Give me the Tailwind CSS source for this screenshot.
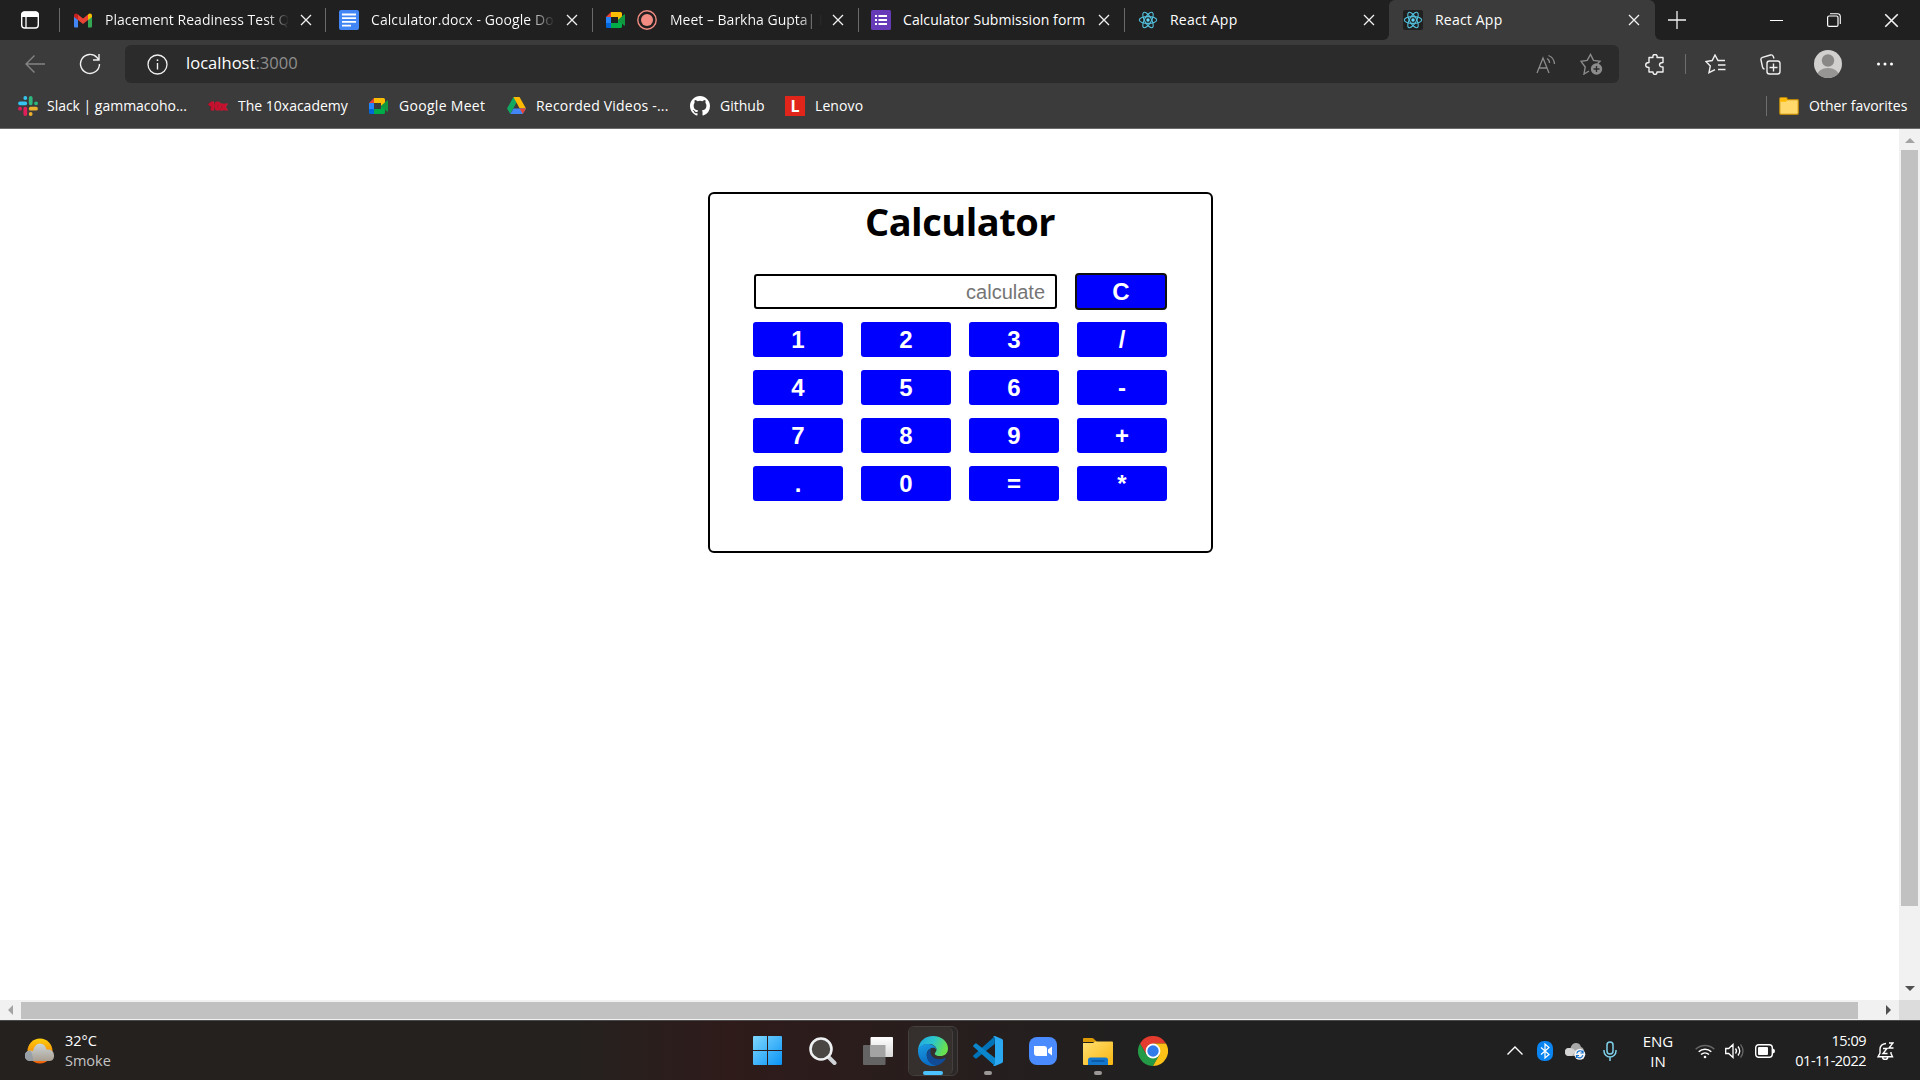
<!DOCTYPE html>
<html lang="en">
<head>
<meta charset="utf-8">
<title>React App</title>
<script src="https://cdn.jsdelivr.net/npm/@tailwindcss/browser@4"></script>
</head>
<body class="w-[1920px] h-[1080px] overflow-hidden flex flex-col bg-white font-['Open_Sans','Noto_Sans',sans-serif] text-[14px] text-white">

<svg class="hidden">
  <defs>
    <symbol id="x" viewBox="0 0 12 12"><path d="M1 1l10 10M11 1L1 11" stroke="#f2f2f2" stroke-width="1.3" fill="none"/></symbol>
    <symbol id="meet" viewBox="0 0 20 16">
      <path d="M0 5L5 0v5z" fill="#ea4335"/><path d="M5 0h9.500q1.500 0 1.500 1.500V6l-4 3V5H5z" fill="#fbbc04"/>
      <path d="M0 5h5v6H0z" fill="#2684fc"/><path d="M0 11h5v5H1.500Q0 16 0 14.500z" fill="#0066da"/>
      <path d="M5 11h7V8l4-3v9.500q0 1.500-1.500 1.500H5z" fill="#00ac47"/><path d="M12 8l6-5.500q1-.7 1 .5v10q0 1.200-1 .5z" fill="#11983f"/>
    </symbol>
    <symbol id="react" viewBox="0 0 20 20">
      <g fill="none" stroke="#53c1de" stroke-width="1.100"><ellipse cx="10" cy="10" rx="8.700" ry="3.400"/><ellipse cx="10" cy="10" rx="8.700" ry="3.400" transform="rotate(60 10 10)"/><ellipse cx="10" cy="10" rx="8.700" ry="3.400" transform="rotate(120 10 10)"/></g><circle cx="10" cy="10" r="1.700" fill="#61dafb"/>
    </symbol>
  </defs>
</svg>

<!-- Tab strip -->
<div class="h-10 shrink-0 flex bg-[#3b3b3b]">
  <div class="w-[1389px] shrink-0 flex items-center bg-[#202020] rounded-br-md">
    <div class="w-[59px] pl-5"><svg class="size-5" viewBox="0 0 20 20"><rect x="1.700" y="2" width="16.600" height="16" rx="3" fill="none" stroke="#fff" stroke-width="1.400"/><path d="M1.500 4.500Q1.500 1.500 4.500 1.500h11q3 0 3 3V7h-17z" fill="#fff"/><path d="M6 7v11" stroke="#fff" stroke-width="1.300"/></svg></div>
    <div class="w-[266px] h-6 flex items-center border-l border-[#6a6a6a]">
      <svg class="ml-3.5 w-[18px] h-[15px]" viewBox="0 0 18 14"><path d="M0 2v11q0 1 1 1h3V5z" fill="#4285f4"/><path d="M18 2v11q0 1-1 1h-3V5z" fill="#34a853"/><path d="M4 1l5 4 5-4v5.500L9 10.500 4 6.500z" fill="#ea4335"/><path d="M0 2Q0 0 2 0q1 0 2 1v5.500L0 3.500z" fill="#c5221f"/><path d="M18 2q0-2-2-2-1 0-2 1v5.500l4-3z" fill="#fbbc04"/></svg>
      <span class="ml-[13px] mb-0.5 w-[184px] overflow-hidden whitespace-nowrap tracking-[0.020px] bg-linear-to-r from-white from-88% to-transparent bg-clip-text text-transparent">Placement Readiness Test Q</span>
      <svg class="ml-[11px] size-3"><use href="#x"/></svg>
    </div>
    <div class="w-[267px] h-6 flex items-center border-l border-[#6a6a6a]">
      <svg class="ml-[13px] size-5" viewBox="0 0 20 20"><rect width="20" height="20" rx="2" fill="#4285f4"/><path d="M3 4.500h14M3 8.200h14M3 11.900h14M3 15.600h9" stroke="#fff" stroke-width="1.800"/></svg>
      <span class="ml-3 mb-0.5 w-[184px] overflow-hidden whitespace-nowrap tracking-[0.080px] bg-linear-to-r from-white from-86% to-transparent bg-clip-text text-transparent">Calculator.docx - Google Doc</span>
      <svg class="ml-[11px] size-3"><use href="#x"/></svg>
    </div>
    <div class="w-[266px] h-6 flex items-center border-l border-[#6a6a6a]">
      <svg class="ml-[13px] w-[20px] h-[16px]"><use href="#meet"/></svg>
      <svg class="ml-[11px] size-5" viewBox="0 0 20 20"><circle cx="10" cy="10" r="9.200" fill="none" stroke="#f28b82" stroke-width="1.400"/><circle cx="10" cy="10" r="6" fill="#f28b82"/></svg>
      <span class="ml-[13px] mb-0.5 w-[152px] overflow-hidden whitespace-nowrap bg-linear-to-r from-white from-84% to-transparent bg-clip-text text-transparent">Meet – Barkha Gupta| P</span>
      <svg class="ml-[10px] size-3"><use href="#x"/></svg>
    </div>
    <div class="w-[266px] h-6 flex items-center border-l border-[#6a6a6a]">
      <svg class="ml-3 size-5" viewBox="0 0 20 20"><rect width="20" height="20" rx="1.500" fill="#673ab7"/><path d="M7.500 6h8.500M7.500 10h8.500M7.500 14h8.500" stroke="#fff" stroke-width="2"/><path d="M4 6h2M4 10h2M4 14h2" stroke="#fff" stroke-width="2"/></svg>
      <span class="ml-3 mb-0.5 w-[185px] whitespace-nowrap tracking-[0.080px]">Calculator Submission form</span>
      <svg class="ml-[10px] size-3"><use href="#x"/></svg>
    </div>
    <div class="w-[265px] h-6 flex items-center border-l border-[#6a6a6a]">
      <svg class="ml-[13px] size-5"><use href="#react"/></svg>
      <span class="ml-3 mb-0.5 w-[185px] tracking-[0.200px]">React App</span>
      <svg class="ml-2 size-3"><use href="#x"/></svg>
    </div>
  </div>
  <div class="w-[266px] shrink-0 bg-[#202020]"><div class="h-full flex items-center bg-[#3b3b3b] rounded-t-md">
    <svg class="ml-3.5 size-5 rounded-xs bg-[#202020]"><use href="#react"/></svg>
    <span class="ml-3 mb-0.5 w-[182px] tracking-[0.200px]">React App</span>
    <svg class="ml-[11px] size-3"><use href="#x"/></svg>
  </div></div>
  <div class="flex-1 flex items-center bg-[#202020] rounded-bl-md">
    <svg class="ml-[13px] size-[18px]" viewBox="0 0 18 18"><path d="M9 0v18M0 9h18" stroke="#f2f2f2" stroke-width="1.300"/></svg>
    <div class="ml-[84px] w-[13px] h-px bg-white"></div>
    <svg class="ml-11 size-[14px]" viewBox="0 0 14 14"><rect x=".6" y="3" width="10.400" height="10.400" rx="1.500" fill="none" stroke="#fff" stroke-width="1.200"/><path d="M3 .8h7.500q2.800 0 2.800 2.800V11" fill="none" stroke="#fff" stroke-width="1.100"/></svg>
    <svg class="ml-[43px] size-[15px]"><use href="#x"/></svg>
  </div>
</div>

<!-- Address bar -->
<div class="h-[48px] shrink-0 flex items-center bg-[#3b3b3b]">
  <svg class="ml-[25px] w-5 h-[18px]" viewBox="0 0 20 18"><path d="M20 9H1M9.500 .5L1 9l8.500 8.500" fill="none" stroke="#848484" stroke-width="1.400"/></svg>
  <svg class="ml-[34px] size-[22px]" viewBox="0 0 22 22"><path d="M20.500 11a9.500 9.500 0 1 1-2.500-6.500L20 7M20 1v6h-6" fill="none" stroke="#f0f0f0" stroke-width="1.400"/></svg>
  <div class="ml-[24px] w-[1494px] h-[38px] flex items-center rounded-md bg-[#2b2b2b]">
    <svg class="ml-[22px] size-[21px]" viewBox="0 0 21 21"><circle cx="10.500" cy="10.500" r="9.500" fill="none" stroke="#f0f0f0" stroke-width="1.300"/><path d="M10.500 9v6.500" stroke="#f0f0f0" stroke-width="1.400"/><circle cx="10.500" cy="6.200" r=".9" fill="#f0f0f0"/></svg>
    <span class="ml-[18px] mb-px text-[16.500px] tracking-[0.030px]">localhost<span class="text-[#8e8e8e]">:3000</span></span>
    <svg class="ml-auto w-5 h-[20px]" viewBox="0 0 20 20" fill="none" stroke="#8c8c8c" stroke-width="1.300"><path d="M1 19L7 4l6 15M3 14h8M11 4.500a5 5 0 0 1 2.500 4.500M12.500 1.500A9.500 9.500 0 0 1 18.500 10M11 4.500"/></svg>
    <svg class="ml-6 mr-4 w-[23px] h-[22px]" viewBox="0 0 23 22"><path d="M9 18l-5 3 1.200-7L1 8.300l6.200-.9L10.500 1.500l3 5.900 6.500.9-2.500 2.500" fill="none" stroke="#8c8c8c" stroke-width="1.400"/><circle cx="16.500" cy="16" r="5.700" fill="#8c8c8c"/><path d="M16.500 13v6M13.500 16h6" stroke="#2b2b2b" stroke-width="1.300"/></svg>
  </div>
  <svg class="ml-[26px] w-[20px] h-[21px]" viewBox="0 0 20 21"><path d="M4 3.500h4q-.5-3 2-3t2 3h6v5q-3.500 0-3.500 2.300T18 13v5h-6q0 2.500-2 2.500T8 18H4v-4.500q-3.300 0-3.300-2.500T4 8.500z" fill="none" stroke="#f0f0f0" stroke-width="1.400" stroke-linejoin="round"/></svg>
  <div class="ml-5 w-px h-5 bg-[#6d6d6d]"></div>
  <svg class="ml-[19px] w-[21px] h-5" viewBox="0 0 21 20" fill="none" stroke="#f0f0f0" stroke-width="1.400"><path d="M20 6.500h-7L10 1 7.200 6.500 1 7.500l4.300 4.500L4 18.700l6-3M13 11h7.500M13 15.500h7.500"/></svg>
  <svg class="ml-[34px] w-[21px] h-[21px]" viewBox="0 0 21 21" fill="none" stroke="#f0f0f0" stroke-width="1.400"><rect x="7" y="7" width="13" height="13" rx="2.500"/><path d="M13.500 9.500v8M9.500 13.500h8M4.500 15Q3 15 2.500 13L1 6Q.5 4 2.500 3.300L10.500 1q2-.5 2.800 1.500L14 4.500"/></svg>
  <svg class="ml-[33px] size-7" viewBox="0 0 28 28"><defs><clipPath id="av"><circle cx="14" cy="14" r="14"/></clipPath></defs><g clip-path="url(#av)"><rect width="28" height="28" fill="#d2d0ce"/><circle cx="14" cy="10.500" r="6.200" fill="#8a8886"/><ellipse cx="14" cy="26" rx="11" ry="8" fill="#979593"/></g></svg>
  <svg class="ml-[34px] w-[18px] h-1" viewBox="0 0 18 4" fill="#fff"><circle cx="2.500" cy="2" r="1.500"/><circle cx="9" cy="2" r="1.500"/><circle cx="15.500" cy="2" r="1.500"/></svg>
</div>

<!-- Favorites bar -->
<div class="h-[41px] shrink-0 flex items-center bg-[#3b3b3b] border-b border-[#6b6b6b] pb-[5px] whitespace-nowrap">
  <svg class="ml-[18px] size-5" viewBox="0 0 20 20" stroke-width="3.800" stroke-linecap="round"><path d="M7.300 1.900v.1M2 7.300h5.300" stroke="#36c5f0"/><path d="M12.700 2v5.300M18 7.300h.1" stroke="#2eb67d"/><path d="M12.700 12.700h5.300M12.700 18v.1" stroke="#ecb22e"/><path d="M2 12.700h.1M7.300 12.700V18" stroke="#e01e5a"/></svg>
  <span class="ml-[9px] w-[142px] tracking-[-0.020px]">Slack | gammacoho...</span>
  <span class="ml-[19px] w-5 text-[11px] leading-5 font-black text-[#c8102e] tracking-[-0.500px] [-webkit-text-stroke:1px_#c8102e]">10x</span>
  <span class="ml-[10px] w-[112px]">The 10xacademy</span>
  <svg class="ml-[19px] w-5 h-4"><use href="#meet"/></svg>
  <span class="ml-[10px] w-[88px] tracking-[0.300px]">Google Meet</span>
  <svg class="ml-5 w-[19px] h-[17px]" viewBox="0 0 19 17"><path d="M6.500 0h6L9.500 5.500 3.300 17 0 11.500z" fill="#11a861"/><path d="M6.500 0h6L19 11.500h-6.300z" fill="#ffba00"/><path d="M3.300 17L6.500 11.500H19L15.700 17z" fill="#4285f4"/><path d="M12.700 11.500H19L15.700 17z" fill="#ea4335"/></svg>
  <span class="ml-[10px] w-[134px] tracking-[0.200px]">Recorded Videos -...</span>
  <svg class="ml-5 size-5" viewBox="0 0 16 16"><path fill="#fff" d="M8 0C3.580 0 0 3.580 0 8c0 3.540 2.290 6.530 5.470 7.590.4.070.55-.17.55-.38 0-.19-.01-.82-.01-1.490-2.010.37-2.530-.49-2.690-.94-.09-.23-.48-.94-.82-1.130-.28-.15-.68-.52-.01-.53.63-.01 1.080.58 1.230.82.72 1.210 1.870.87 2.330.66.070-.52.28-.87.51-1.070-1.780-.2-3.640-.89-3.640-3.950 0-.87.31-1.590.82-2.150-.08-.2-.36-1.020.08-2.120 0 0 .67-.21 2.200.82a7.500 7.500 0 0 1 4 0c1.530-1.040 2.200-.82 2.200-.82.44 1.100.16 1.920.08 2.120.51.56.82 1.270.82 2.150 0 3.070-1.870 3.750-3.650 3.950.29.25.54.73.54 1.480 0 1.070-.01 1.930-.01 2.200 0 .21.15.46.55.38A8 8 0 0 0 16 8c0-4.420-3.580-8-8-8"/></svg>
  <span class="ml-[10px] w-[46px]">Github</span>
  <span class="ml-[19px] size-5 bg-[#e1251b] flex items-center justify-center font-bold text-[16px] leading-5">L</span>
  <span class="ml-[10px] tracking-[0.100px]">Lenovo</span>
  <div class="ml-auto w-px h-5 bg-[#6d6d6d]"></div>
  <svg class="ml-3 w-5 h-[18px]" viewBox="0 0 20 18"><path d="M.7 2Q.7.700 2 .700h5q1 0 1.700 2H18.500q.8 0 .8.800v12.500q0 1.300-1.300 1.300H2Q.7 17.300.7 16z" fill="#ffd96b" stroke="#b8860b" stroke-width="1.200"/><path d="M1.300 1.300H7l1.500 1.700L7 4.700H1.300z" fill="#ffb900"/></svg>
  <span class="ml-[10px] mr-3 w-[99px]">Other favorites</span>
</div>

<!-- Page -->
<div class="h-[891px] shrink-0 flex text-black">
  <div class="w-[1899px] flex flex-col bg-white">
    <main class="flex-1 pt-[63px] pl-[708px]">
      <section class="w-[505px] h-[361px] border-2 border-black rounded-md pl-[43px]">
        <h1 class="h-[54px] w-[414px] text-center leading-[54px] font-bold text-[38px] tracking-[-0.500px]">Calculator</h1>
        <div class="mt-[26px] w-[414px] grid grid-cols-4 gap-x-[18px] gap-y-[13px] font-['Liberation_Sans',Arial,sans-serif] font-bold text-[24px] text-white *:h-[35px]">
          <input class="col-span-3 ml-px w-[303px] border-2 border-black rounded-[3px] px-[10px] pt-0.5 text-right font-normal text-[20px] placeholder:text-[#757575]" placeholder="calculate">
          <button class="bg-[#0000ff] rounded-[3px] mr-px -ml-px outline-2 outline-[#101010] -outline-offset-1">C</button>
          <button class="bg-[#0000ff] rounded-[3px]">1</button><button class="bg-[#0000ff] rounded-[3px]">2</button><button class="bg-[#0000ff] rounded-[3px]">3</button><button class="bg-[#0000ff] rounded-[3px]">/</button>
          <button class="bg-[#0000ff] rounded-[3px]">4</button><button class="bg-[#0000ff] rounded-[3px]">5</button><button class="bg-[#0000ff] rounded-[3px]">6</button><button class="bg-[#0000ff] rounded-[3px]">-</button>
          <button class="bg-[#0000ff] rounded-[3px]">7</button><button class="bg-[#0000ff] rounded-[3px]">8</button><button class="bg-[#0000ff] rounded-[3px]">9</button><button class="bg-[#0000ff] rounded-[3px]">+</button>
          <button class="bg-[#0000ff] rounded-[3px]">.</button><button class="bg-[#0000ff] rounded-[3px]">0</button><button class="bg-[#0000ff] rounded-[3px]">=</button><button class="bg-[#0000ff] rounded-[3px]">*</button>
        </div>
      </section>
    </main>
    <div class="h-5 flex items-center bg-[#f1f1f1]">
      <svg class="ml-2 w-[5px] h-[10px]" viewBox="0 0 5 10"><path d="M5 0v10L0 5z" fill="#a3a3a3"/></svg>
      <div class="ml-2 w-[1837px] h-[17px] mt-px bg-[#c1c1c1]"></div>
      <svg class="ml-[28px] w-[5px] h-[10px]" viewBox="0 0 5 10"><path d="M0 0v10l5-5z" fill="#505050"/></svg>
    </div>
  </div>
  <div class="w-[21px] flex flex-col items-center bg-[#f1f1f1]">
    <svg class="mt-[9px] w-[10px] h-[5px] shrink-0" viewBox="0 0 10 5"><path d="M0 5h10L5 0z" fill="#a3a3a3"/></svg>
    <div class="mt-[7px] w-[17px] h-[756px] bg-[#c1c1c1]"></div>
    <svg class="mt-20 w-[10px] h-[5px] shrink-0" viewBox="0 0 10 5"><path d="M0 0h10L5 5z" fill="#505050"/></svg>
    <div class="mt-auto w-full h-5 bg-[#dcdcdc]"></div>
  </div>
</div>

<!-- Taskbar -->
<footer class="flex-1 flex items-center border-t border-[#4a4a4a] bg-linear-to-r from-[#25211f] from-30% via-[#2e1b1a] via-38% to-[#202020] to-60%">
  <svg class="ml-[25px] w-[29px] h-[26px] shrink-0" viewBox="0 0 29 26"><defs><linearGradient id="sun" x2="0" y2="1"><stop stop-color="#ffcf0a"/><stop offset="1" stop-color="#f0600a"/></linearGradient><linearGradient id="cl" x2="0" y2="1"><stop stop-color="#ccd5d8"/><stop offset="1" stop-color="#a99f92"/></linearGradient></defs><circle cx="15" cy="13" r="12.500" fill="url(#sun)"/><path d="M5 23a5 5 0 0 1 0-10.500q1.500 0 3 .5Q10 5.500 15 5.500t6.500 6q7-.5 7.500 5.500T24 23z" fill="url(#cl)"/><path d="M0 17.500Q.5 12.800 5 12.500q3 3 3 10.500H5q-5-.5-5-5.500" fill="#8b9aa6" opacity=".7"/></svg>
  <div class="ml-[11px] w-[60px] leading-5 text-[14.500px]"><div>32°C</div><div class="text-[#c4c4c4]">Smoke</div></div>

  <svg class="ml-[628px] size-[29px] shrink-0" viewBox="0 0 29 29"><defs><linearGradient id="wn" x2="1" y2="1"><stop stop-color="#7fd8ff"/><stop offset="1" stop-color="#0a93f5"/></linearGradient></defs><path d="M0 1q0-1 1-1h13v14H0zM15 0h13q1 0 1 1v13H15zM0 15h14v14H1q-1 0-1-1zM15 15h14v13q0 1-1 1H15z" fill="url(#wn)"/></svg>
  <svg class="ml-[27px] size-7 shrink-0" viewBox="0 0 28 28"><path d="M19.500 20l6 6" stroke="#cfd3d6" stroke-width="4" stroke-linecap="round"/><circle cx="12" cy="12" r="10.500" fill="#4a4644" stroke="#eef0f2" stroke-width="2.600"/></svg>
  <svg class="ml-[26px] w-[30px] h-[28px] shrink-0" viewBox="0 0 30 28"><defs><linearGradient id="tv" x2="0" y2="1"><stop stop-color="#fff"/><stop offset="1" stop-color="#d8d8d8"/></linearGradient></defs><rect y="8" width="22.500" height="20" rx="1" fill="#646464"/><rect x="7.500" width="22.500" height="20" rx="1" fill="url(#tv)"/><path d="M7.500 8h15v12h-15z" fill="#a3a3a3"/></svg>
  <div class="ml-[15px] w-[50px] h-[50px] shrink-0 border border-[#423f3e] rounded-md bg-[#2c2827]">
    <div class="w-11 h-12 flex flex-col items-center border-r border-[#45403f] rounded-md bg-[#352f2e] pl-[5px]">
      <svg class="mt-[9px] size-[30px] shrink-0" viewBox="0 0 30 30"><defs><linearGradient id="e1" x2="1" y2=".3"><stop stop-color="#1fa5e8"/><stop offset=".55" stop-color="#2dc7c9"/><stop offset="1" stop-color="#68e04f"/></linearGradient><linearGradient id="e2" x2=".3" y2="1"><stop stop-color="#1b9de2"/><stop offset="1" stop-color="#0a6cc4"/></linearGradient></defs><path d="M0 14C1 5 7 0 15 0c9 0 15 6 15 12.500 0 5-3.500 7.500-7.500 7.500-3.500 0-6-1.200-5.700-2.600.2-.8 1.700-1.400 1.700-3.900 0-3.500-4-5.500-8-5.500-5 0-9 3-10.500 6z" fill="url(#e1)"/><path d="M0 15C0 10.500 4 8 9.500 8c5 0 9 2.500 9 5.500-1.500-2-3.500-2-5-1.500-4 1.500-5.500 5-4.500 9s4.500 8 9.500 8.500q-1.500.5-3.500.5C6 30 0 23 0 15z" fill="url(#e2)"/><path d="M13 12.300c-3 1.700-4.700 5.200-4 8.700 1 5 5.500 9 10 8.500 3.500-1 6.500-3.500 8.500-6.500.5-1-.3-1.200-1-.8C20 25 12.500 22 12.500 16q0-2.200.5-3.700z" fill="#114b96"/></svg>
      <div class="mt-[5px] w-5 h-1 shrink-0 rounded-full bg-[#4cc2ff]"></div>
    </div>
  </div>
  <div class="ml-[15px] w-[30px] h-[50px] flex flex-col items-center shrink-0">
    <svg class="mt-[10px] size-[30px] shrink-0" viewBox="0 0 30 30"><path d="M22 0l-.3 8L3.800 22.300Q3 23 2 22.200L.5 20.800q-.8-.8 0-1.600z" fill="#0072b8"/><path d="M.5 10.800q-.8-.8 0-1.600L2 7.800q1-.8 1.800-.1L22 22v8z" fill="#0b86cc"/><path d="M22 0l7 3q1 .6 1 1.700v20.600q0 1.100-1 1.700l-7 3q-1 .2-2-.8 2 .3 2-1.700V2.500Q22 .5 20 .8q1-1 2-.8z" fill="#2aa8f2"/></svg>
    <div class="mt-[5px] w-2 h-1 shrink-0 rounded-full bg-[#9a9796]"></div>
  </div>
  <svg class="ml-[26px] size-7 shrink-0" viewBox="0 0 28 28"><rect width="28" height="28" rx="8" fill="#4a8cff"/><path d="M5 9h10q3 0 3 3v7H8q-3 0-3-3zM19 12.500L23 9.500v9L19 15.500z" fill="#fff"/></svg>
  <div class="ml-[26px] w-[30px] h-[50px] flex flex-col items-center shrink-0">
    <svg class="mt-3 w-[30px] h-[27px] shrink-0" viewBox="0 0 30 27"><defs><linearGradient id="fd" x2="1" y2="1"><stop stop-color="#ffdf70"/><stop offset="1" stop-color="#f8b611"/></linearGradient></defs><path d="M0 1q0-1 1-1h8q1.500 0 3 2l2 2H0z" fill="#dd9b05"/><path d="M0 5h10l2-1.500h17q1 0 1 1V26q0 1-1 1H1q-1 0-1-1z" fill="url(#fd)"/><path d="M5 27v-5q0-2.500 2.500-2.500h15q2.500 0 2.500 2.500v5z" fill="#1277cd"/><path d="M8.500 23h13" stroke="#0a4f96" stroke-width="1.300"/></svg>
    <div class="mt-[6px] w-2 h-1 shrink-0 rounded-full bg-[#9a9796]"></div>
  </div>
  <svg class="ml-[25px] size-[30px] shrink-0" viewBox="0 0 30 30"><path d="M2 7.500A15 15 0 0 1 28 7.500L15 7.500 8.500 18.700z" fill="#e33b2e"/><path d="M2 7.500A15 15 0 0 0 15 30l6.500-11.200H8.500z" fill="#249a46"/><path d="M28 7.500A15 15 0 0 1 15 30l6.500-11.200L15 7.500z" fill="#fbc116"/><circle cx="15" cy="15" r="7.400" fill="#fff"/><circle cx="15" cy="15" r="5.700" fill="#2f7bea"/></svg>

  <svg class="ml-[339px] w-4 h-[9px] shrink-0" viewBox="0 0 16 9"><path d="M.5 8.500L8 1l7.500 7.500" fill="none" stroke="#fff" stroke-width="1.400"/></svg>
  <svg class="ml-3.5 w-4 h-5 shrink-0" viewBox="0 0 16 20"><rect width="16" height="20" rx="7" fill="#0a84f0"/><path d="M4 6.500l8 7L8 17V3l4 3.500-8 7" fill="none" stroke="#fff" stroke-width="1.200"/></svg>
  <svg class="ml-3 mt-0.5 w-[21px] h-[17px] shrink-0" viewBox="0 0 21 17"><path d="M4 13a4 4 0 0 1 0-8q1-.2 1.500 0Q7 0 11 0t5 4q2.500.500 3 4v5z" fill="#a8a8a8"/><path d="M4 13a4 4 0 0 1 0-8q4-.5 6.500 3L7 13z" fill="#d4d4d4"/><circle cx="14.800" cy="11.300" r="5.500" fill="#f5f5f5"/><path d="M11.800 10.500a3.300 3.300 0 0 1 5.800-1.500M17.800 12.200a3.300 3.300 0 0 1-5.800 1.500M18 7.500V10h-2.500M11.500 15v-2.500H14" fill="none" stroke="#1673d0" stroke-width="1.200"/></svg>
  <svg class="ml-[17px] w-[14px] h-5 shrink-0" viewBox="0 0 14 20" fill="none" stroke="#7fd0ea" stroke-width="1.500"><rect x="4" y="1" width="6" height="12" rx="3"/><path d="M1 9v1a6 6 0 0 0 12 0V9M7 16v4"/></svg>
  <div class="ml-[21px] w-10 leading-5 text-center text-[15px]"><div>ENG</div><div>IN</div></div>
  <svg class="ml-[17px] w-5 h-4 shrink-0" viewBox="0 0 20 16" fill="none" stroke="#fff" stroke-width="1.500"><path d="M.7 6.300a13 13 0 0 1 18.600 0" stroke="#666"/><path d="M3.700 8.800a9 9 0 0 1 12.600 0M6 11.500a6 6 0 0 1 8 0"/><circle cx="10" cy="14" r="1.300" fill="#fff" stroke="none"/></svg>
  <svg class="ml-2.5 w-5 h-4 shrink-0" viewBox="0 0 20 16" fill="none" stroke="#fff" stroke-width="1.300"><path d="M.7 5.500h3L8 1.500v13l-4.300-4h-3zM10.500 5.500q2 2.500 0 5M13 3.500q3.500 4.500 0 9"/><path d="M15.500 1.300q5 6.700 0 13.400" stroke="#666"/></svg>
  <svg class="ml-2.5 w-5 h-[14px] shrink-0" viewBox="0 0 20 14"><rect x=".7" y=".7" width="16.600" height="12.600" rx="3" fill="none" stroke="#fff" stroke-width="1.400"/><rect x="3" y="3" width="10" height="8" rx="1" fill="#fff"/><path d="M18 4.500q2 .5 2 2.500t-2 2.500z" fill="#fff"/></svg>
  <div class="ml-4 w-[75px] leading-5 text-right whitespace-nowrap text-[14.500px] tracking-[-0.500px]"><div>15:09</div><div>01-11-2022</div></div>
  <svg class="ml-[11px] w-[17px] h-[18px] shrink-0" viewBox="0 0 17 18" fill="none" stroke="#fff" stroke-width="1.400"><path d="M9 1.500Q3 2 3 7.500V11l-2 3.800h14.500L14 11.500V10M5.500 15.500q.5 2 2.700 2t2.600-2M6 6.500h4l-4 5h4.500M12 1h4l-4 5h4.500"/></svg>
</footer>
</body>
</html>
